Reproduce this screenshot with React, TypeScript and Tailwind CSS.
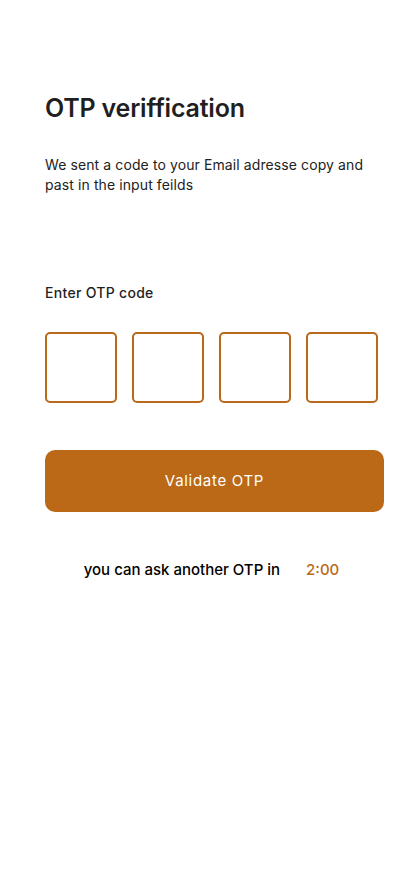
export default function App() {
  return (
    <div className="min-h-[896px] w-[414px] bg-white font-['Inter','Noto_Sans',sans-serif] text-[#1f1f1f]">
      <div className="pl-[45px] pr-[30px] pt-[92px]">
        {/* Header */}
        <h1 className="text-[25px] leading-[32px] font-semibold tracking-[-0.2px]">OTP veriffication</h1>
        <p className="mt-[31px] w-[330px] text-[14px] leading-[20px] tracking-[0.1px] text-[#222]">
          We sent a code to your Email adresse copy and past in the input feilds
        </p>

        {/* OTP inputs */}
        <div className="mt-[88px] text-[14px] leading-[20px] font-medium tracking-[0.3px]">Enter OTP code</div>
        <div className="mt-[29px] flex gap-[15px]">
          {[0, 1, 2, 3].map(i => (
            <input
              key={i}
              maxLength={1}
              className="w-[72px] h-[71px] rounded-[5px] border-2 border-[#b9691b] text-center text-[24px] outline-none"
            />
          ))}
        </div>

        {/* Submit */}
        <button className="mt-[47px] w-[339px] h-[62px] rounded-[10px] bg-[#bb6917] text-white text-[15px] tracking-[0.7px]">
          Validate OTP
        </button>

        <div className="mt-[48px] w-[339px] pr-[6px] flex justify-center gap-[26px] text-[15px] leading-[20px] font-medium">
          <span className="text-black">you can ask another OTP in</span>
          <span className="text-[#bb6917]">2:00</span>
        </div>
      </div>
    </div>
  )
}
